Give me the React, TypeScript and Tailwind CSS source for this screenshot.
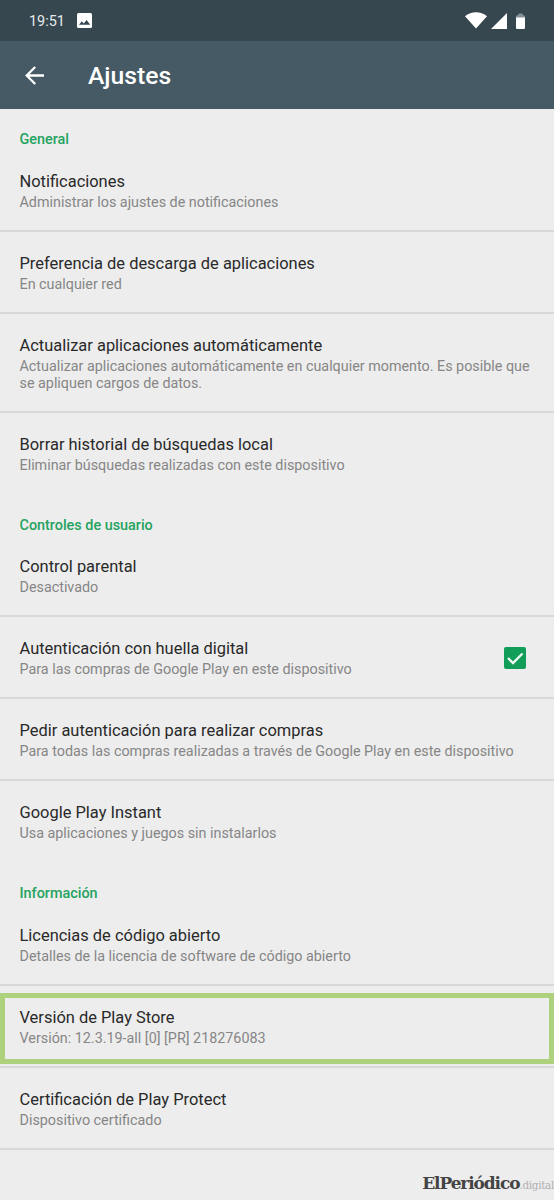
import React from 'react'
import clsx from 'clsx'

type Item = {
  title: string
  lines: string[]
  checked?: boolean
  highlighted?: boolean
}

type Section = {
  label: string
  items: Item[]
}

const sections: Section[] = [
  {
    label: 'General',
    items: [
      { title: 'Notificaciones', lines: ['Administrar los ajustes de notificaciones'] },
      { title: 'Preferencia de descarga de aplicaciones', lines: ['En cualquier red'] },
      {
        title: 'Actualizar aplicaciones automáticamente',
        lines: [
          'Actualizar aplicaciones automáticamente en cualquier momento. Es posible que',
          'se apliquen cargos de datos.',
        ],
      },
      { title: 'Borrar historial de búsquedas local', lines: ['Eliminar búsquedas realizadas con este dispositivo'] },
    ],
  },
  {
    label: 'Controles de usuario',
    items: [
      { title: 'Control parental', lines: ['Desactivado'] },
      {
        title: 'Autenticación con huella digital',
        lines: ['Para las compras de Google Play en este dispositivo'],
        checked: true,
      },
      {
        title: 'Pedir autenticación para realizar compras',
        lines: ['Para todas las compras realizadas a través de Google Play en este dispositivo'],
      },
      { title: 'Google Play Instant', lines: ['Usa aplicaciones y juegos sin instalarlos'] },
    ],
  },
  {
    label: 'Información',
    items: [
      { title: 'Licencias de código abierto', lines: ['Detalles de la licencia de software de código abierto'] },
      { title: 'Versión de Play Store', lines: ['Versión: 12.3.19-all [0] [PR] 218276083'], highlighted: true },
      { title: 'Certificación de Play Protect', lines: ['Dispositivo certificado'] },
    ],
  },
]

function StatusBar() {
  return (
    <div className="flex h-[41px] items-center bg-[#37474f] px-[29px] text-[#e6eaec]">
      <span className="pt-[3px] text-[14.4px] leading-none">19:51</span>
      <svg className="ml-3 size-[15px]" viewBox="0 0 15 15">
        <rect width="15" height="15" rx="1.5" fill="#fff" />
        <path d="M2 11.8 4.8 8.2l2 2.4 2.8-3.7 3.6 4.9z" fill="#37474f" />
      </svg>
      <div className="ml-auto flex items-center">
        <svg className="h-[17px] w-[22px]" viewBox="0 0 22 17" fill="#fff">
          <path d="M0 4.2C6.2-1.2 15.8-1.2 22 4.2L11 16.6z" />
        </svg>
        <svg className="ml-1 size-4" viewBox="0 0 16 16" fill="#fff">
          <path d="M16 0v16H0z" />
        </svg>
        <svg className="ml-[9px] h-4 w-[9px]" viewBox="0 0 9 16">
          <path d="M0 5V3l2-1 1-1.5h3L7 2l2 1v2z" fill="#859096" />
          <path d="M0 4.5h9V15q0 1-1 1H1q-1 0-1-1z" fill="#fff" />
        </svg>
      </div>
    </div>
  )
}

function AppBar() {
  return (
    <header className="flex h-[68px] items-center bg-[#455a64] pl-[25px] text-white">
      <svg className="size-[19px]" viewBox="0 0 19 19" fill="none" stroke="#fff" strokeWidth="2.3">
        <path d="M19 9.5H1.8M10.2 1 1.7 9.5l8.5 8.5" />
      </svg>
      <h1 className="ml-11 pt-[3px] text-[24.7px] font-medium leading-none">Ajustes</h1>
    </header>
  )
}

function Row({ item, last }: { item: Item; last: boolean }) {
  return (
    <li
      className={clsx(
        'relative flex items-center justify-between border-b-2 pt-[21px] pb-[19px] pl-[19.5px] pr-7',
        last ? 'border-transparent' : 'border-[#d9d9d9]',
      )}
    >
      <div className="whitespace-nowrap">
        <div className="text-[16.46px] leading-[22px] text-[#292929]">{item.title}</div>
        <div className="mt-px text-[14.33px] leading-[17px] text-[#868686]">
          {item.lines.map((line) => (
            <div key={line}>{line}</div>
          ))}
        </div>
      </div>
      {item.checked && (
        <svg className="size-[22px] shrink-0" viewBox="0 0 22 22">
          <rect width="22" height="22" rx="2" fill="#129d58" />
          <path d="m4 11 5 5 9.5-9.5" fill="none" stroke="#eef8f2" strokeWidth="2.4" />
        </svg>
      )}
      {item.highlighted && (
        <div className="absolute inset-x-0 top-[7px] h-[71px] border-[5px] border-[#add17c]" />
      )}
    </li>
  )
}

export default function App() {
  return (
    <div className="relative h-[1200px] w-[554px] overflow-hidden bg-[#ededed] font-['Roboto',sans-serif]">
      <StatusBar />
      <AppBar />
      <main>
        {sections.map((section, i) => (
          <section key={section.label}>
            <h2
              className={clsx(
                'flex items-end pl-[19.5px] text-[14.4px] font-medium leading-[19px] text-[#24a360]',
                i === 1 ? 'h-10' : 'h-[41px] pb-px',
              )}
            >
              {section.label}
            </h2>
            <ul>
              {section.items.map((item, j) => (
                <Row
                  key={item.title}
                  item={item}
                  last={i < sections.length - 1 && j === section.items.length - 1}
                />
              ))}
            </ul>
          </section>
        ))}
      </main>
      {/* watermark */}
      <div className="absolute right-0 bottom-[5px] flex items-baseline whitespace-nowrap font-['Roboto_Slab','DejaVu_Serif',serif] leading-[20px]">
        <span className="text-[17px] font-bold tracking-[-1.1px] text-[#444]">ElPeriódico</span>
        <span className="text-[10.5px] tracking-[-0.35px] text-[#b0b0b0]">.digital</span>
      </div>
    </div>
  )
}
